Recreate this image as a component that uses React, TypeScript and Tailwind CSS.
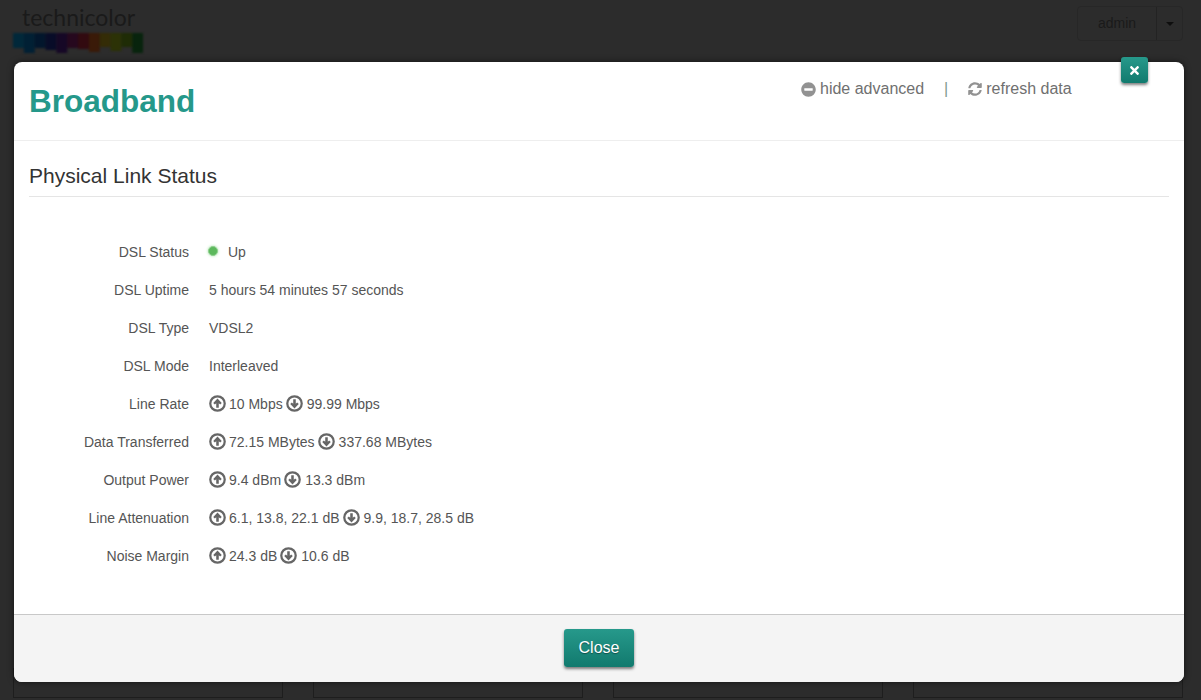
import React from "react";
import { FaMinusCircle, FaSyncAlt, FaTimes } from "react-icons/fa";

function ArrowCircle({ down }: { down?: boolean }) {
  return (
    <svg viewBox="0 0 16 16" className={`w-[17px] h-[17px] -mt-[2px] shrink-0 text-[#666] ${down ? "rotate-180" : ""}`}>
      <circle cx="8" cy="8" r="6.8" fill="none" stroke="currentColor" strokeWidth="2.1" />
      <path d="M8 3.4 L12 7.6 L10.5 9 L9.2 7.7 V12 H6.8 V7.7 L5.5 9 L4 7.6 Z" fill="currentColor" />
    </svg>
  );
}

function UpDown({ up, down }: { up: string; down: string }) {
  return (
    <span className="flex items-center">
      <ArrowCircle />
      <span className="ml-[3px]">{up}</span>
      <span className="ml-[3px] flex"><ArrowCircle down /></span>
      <span className="ml-[4px]">{down}</span>
    </span>
  );
}

function Row({ label, children }: { label: string; children: React.ReactNode }) {
  return (
    <div className="flex items-center h-[38px]">
      <div className="w-[160px] mr-5 text-right">{label}</div>
      {children}
    </div>
  );
}

const logoBars = [
  ["#01283a", 15], ["#012034", 20], ["#02162c", 15], ["#080c28", 17], ["#160826", 20],
  ["#26081e", 15], ["#320a10", 16], ["#3a1a08", 19], ["#342c06", 14], ["#2c3206", 18],
  ["#1f2c06", 14], ["#08240d", 20],
] as const;

function Logo() {
  return (
    <svg viewBox="0 0 130 21" className="w-[130px] h-[21px] blur-[1px]">
      {logoBars.map(([color, h], i) => (
        <rect key={i} x={i * 10.84} y={0} width={10.9} height={h} fill={color} />
      ))}
    </svg>
  );
}

export default function App() {
  return (
    <div className="relative w-[1201px] h-[700px] overflow-hidden bg-[#2c2c2c] font-['Liberation_Sans',Arial,sans-serif] text-[14px] text-[#555]">
      {/* page behind the backdrop */}
      <div className="flex justify-between h-[698px] flex-col pl-[13px] pr-[18px]">
        <div className="flex justify-between">
          <div className="pt-[3px]">
            <div className="pl-[9px] font-['Lato',sans-serif] text-[23px] leading-[28px] text-[#1a1a1a]">technicolor</div>
            <div className="mt-[2px]"><Logo /></div>
          </div>
          <div className="mt-[6px] flex h-[35px] rounded border border-[#272727] text-[#1a1a1a]">
            <div className="w-[79px] flex items-center justify-center border-r border-[#232323]">admin</div>
            <div className="w-[25px] flex items-center justify-center">
              <span className="border-x-4 border-x-transparent border-t-4 border-t-[#0e0e0e]" />
            </div>
          </div>
        </div>
        <div className="grid grid-cols-4 gap-[30px]">
          <div className="h-[30px] border border-[#1e1e1e]" />
          <div className="h-[30px] border border-[#1e1e1e]" />
          <div className="h-[30px] border border-[#1e1e1e]" />
          <div className="h-[30px] border border-[#1e1e1e]" />
        </div>
      </div>

      {/* modal */}
      <div className="absolute left-[14px] top-[62px] w-[1170px] h-[620px] rounded-lg bg-white flex flex-col shadow-[0_0_6px_rgba(0,0,0,0.6)]">
        <div className="relative h-[79px] shrink-0 border-b border-[#eeeeee]">
          <h1 className="absolute left-[15px] top-[19px] text-[31.5px] leading-[40px] font-bold text-[#25988a]">Broadband</h1>
          <div className="absolute left-[787px] top-[17px] flex items-center text-[16px] leading-[20px] text-[#707070]">
            <FaMinusCircle className="w-[15px] h-[15px] text-[#929292] mr-[4px]" />
            <span>hide advanced</span>
            <span className="ml-[20px] mr-[20px] text-[#7f9a8c]">|</span>
            <FaSyncAlt className="w-[14px] h-[14px] text-[#929292] mr-[4px]" />
            <span>refresh data</span>
          </div>
          <button className="absolute right-[36px] -top-[5px] w-[27px] h-[26px] rounded-[3px] flex items-center justify-center text-white bg-gradient-to-b from-[#26998b] to-[#117a6e] shadow-[0_2px_3px_rgba(0,0,0,0.5)]">
            <FaTimes className="w-[13px] h-[13px]" />
          </button>
        </div>

        <div className="flex-1 px-[15px]">
          <div className="mt-[21px] pb-[6px] border-b border-[#e5e5e5] text-[21px] leading-[28px] text-[#333]">Physical Link Status</div>
          <div className="mt-[36px]">
            <Row label="DSL Status">
              <span className="w-[10px] h-[10px] -ml-px -mt-[3px] rounded-full bg-[#5cb85c] border border-[#8fd08f] shadow-[0_0_3px_#a5e0a5]" />
              <span className="ml-[10px]">Up</span>
            </Row>
            <Row label="DSL Uptime">5 hours 54 minutes 57 seconds</Row>
            <Row label="DSL Type">VDSL2</Row>
            <Row label="DSL Mode">Interleaved</Row>
            <Row label="Line Rate"><UpDown up="10 Mbps" down="99.99 Mbps" /></Row>
            <Row label="Data Transferred"><UpDown up="72.15 MBytes" down="337.68 MBytes" /></Row>
            <Row label="Output Power"><UpDown up="9.4 dBm" down="13.3 dBm" /></Row>
            <Row label="Line Attenuation"><UpDown up="6.1, 13.8, 22.1 dB" down="9.9, 18.7, 28.5 dB" /></Row>
            <Row label="Noise Margin"><UpDown up="24.3 dB" down="10.6 dB" /></Row>
          </div>
        </div>

        <div className="h-[68px] shrink-0 rounded-b-lg border-t border-[#c8c8c8] bg-[#f4f4f4] flex items-center justify-center">
          <button className="-mt-[2px] w-[70px] h-[38px] rounded-[3px] text-[16px] text-white [text-shadow:0_1px_1px_rgba(0,0,0,0.4)] bg-gradient-to-b from-[#26998b] to-[#117a6e] shadow-[0_2px_3px_rgba(0,0,0,0.5)]">Close</button>
        </div>
      </div>
    </div>
  );
}
